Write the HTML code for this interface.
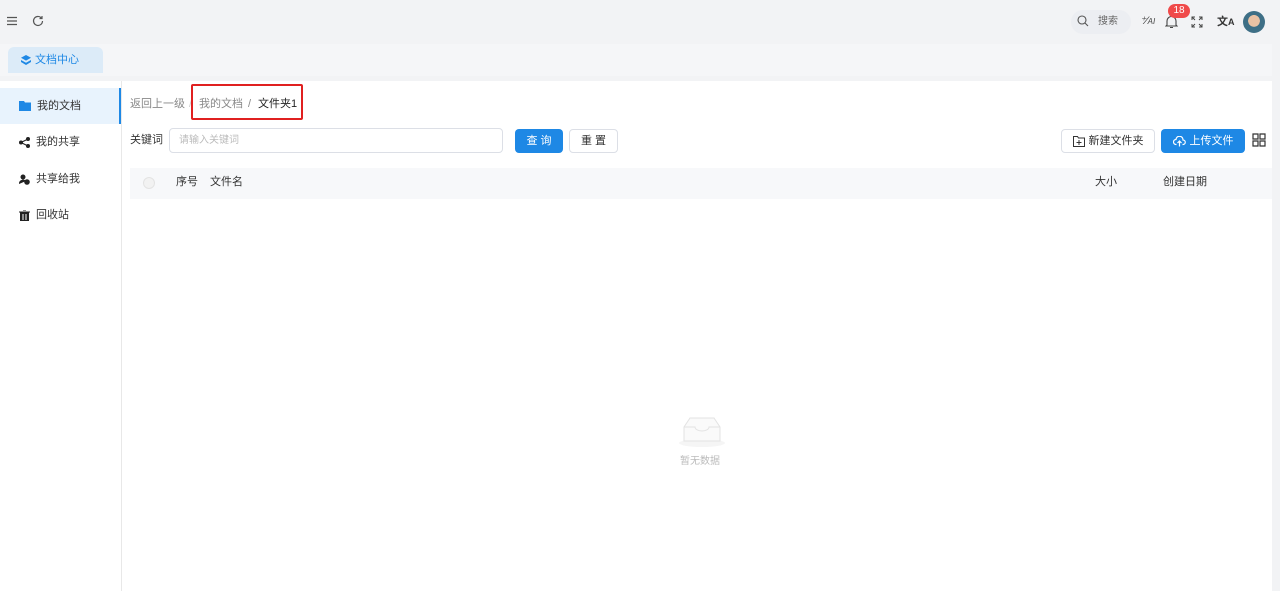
<!DOCTYPE html>
<html><head><meta charset="utf-8"><style>
*{box-sizing:border-box;margin:0;padding:0}
body{width:1280px;height:591px;background:#f2f3f5;font-family:"Liberation Sans","Noto Sans CJK SC",sans-serif;font-size:11px;line-height:14px;color:#333;position:relative;overflow:hidden}
.abs{position:absolute}
.side{left:0;top:81px;width:122px;height:510px;background:#fff;border-right:1px solid #e8e8e8}
.item{position:absolute;left:0;width:121px;height:36px;display:flex;align-items:center;padding-left:19px;font-size:11px;color:#333}
.item svg{margin-right:6px}
.main{left:122px;top:81px;width:1150px;height:510px;background:#fff}
.btn{position:absolute;height:24px;border-radius:4px;display:flex;align-items:center;justify-content:center;font-size:11px}
</style></head><body>
<svg class="abs" style="left:7px;top:16px" width="10" height="10" viewBox="0 0 10 10"><path d="M0 1.5h10M0 5h10M0 8.5h10" stroke="#555" stroke-width="1.2"/></svg>
<svg class="abs" style="left:32px;top:15px" width="12" height="12" viewBox="0 0 12 12"><path d="M10.5 6a4.5 4.5 0 1 1-1.3-3.2M10 1v2.5H7.5" fill="none" stroke="#555" stroke-width="1.2"/></svg>
<div class="abs" style="left:1071px;top:10px;width:60px;height:24px;background:#eceef2;border-radius:12px"></div>
<svg class="abs" style="left:1077px;top:15px" width="12" height="12" viewBox="0 0 12 12"><circle cx="5" cy="5" r="4" fill="none" stroke="#555" stroke-width="1.1"/><path d="M8 8l3 3" stroke="#555" stroke-width="1.1"/></svg>
<div class="abs" style="left:1098px;top:15px;font-size:10px;color:#666">搜索</div>
<div class="abs" style="left:1140px;top:14px;font-size:11px;color:#444;font-style:italic">⁺⁄<span style="font-size:8px">AI</span></div>
<svg class="abs" style="left:1165px;top:15px" width="13" height="14" viewBox="0 0 13 14"><path d="M2 10V6a4.5 4.5 0 0 1 9 0v4l1 1H1zM5 12.5h3" fill="none" stroke="#444" stroke-width="1.1"/></svg>
<div class="abs" style="left:1168px;top:4px;width:22px;height:14px;background:#f04a4a;border-radius:7px;color:#fff;font-size:10px;line-height:14px;text-align:center">18</div>
<svg class="abs" style="left:1191px;top:16px" width="12" height="12" viewBox="0 0 12 12"><path d="M1 4V1h3M8 1h3v3M11 8v3H8M4 11H1V8M1 1l3 3M11 1L8 4M11 11L8 8M1 11l3-3" fill="none" stroke="#444" stroke-width="1"/></svg>
<div class="abs" style="left:1217px;top:15px;font-size:11px;color:#333;font-weight:bold">文<span style="font-size:9px">A</span></div>
<div class="abs" style="left:1243px;top:11px;width:22px;height:22px;border-radius:50%;background:radial-gradient(circle at 50% 45%,#e9c2a4 0 35%,#3e6f86 37%)"></div>
<div class="abs" style="left:0;top:44px;width:1272px;height:32px;background:#f5f6f8"></div>
<div class="abs" style="left:8px;top:47px;width:95px;height:26px;background:#dcebf8;border-radius:6px 6px 0 0;display:flex;align-items:center;padding-left:13px;color:#1e88e5;font-size:11px">
<svg width="10" height="10" viewBox="0 0 10 10" style="margin-right:4px"><path d="M5 0L10 2.8 5 5.6 0 2.8zM0 5l5 2.8L10 5v2L5 10 0 7z" fill="#1e88e5"/></svg>文档中心</div>
<div class="abs side">
<div class="item" style="top:7px;background:#e8f3fd;border-right:2px solid #1e88e5">
<svg width="12" height="10" viewBox="0 0 12 10"><path d="M0 0h5l1 1.5h6V10H0z" fill="#1e88e5"/></svg><span style="color:#333">我的文档</span></div>
<div class="item" style="top:43px"><svg width="11" height="11" viewBox="0 0 11 11"><circle cx="2" cy="5.5" r="2" fill="#222"/><circle cx="9" cy="2" r="2" fill="#222"/><circle cx="9" cy="9" r="2" fill="#222"/><path d="M2 5.5L9 2M2 5.5L9 9" stroke="#222"/></svg>我的共享</div>
<div class="item" style="top:80px"><svg width="11" height="11" viewBox="0 0 11 11"><circle cx="4" cy="3" r="2.5" fill="#222"/><path d="M0 10a4 4 0 0 1 7-3" fill="#222"/><circle cx="8" cy="8" r="2.8" fill="#222"/></svg>共享给我</div>
<div class="item" style="top:116px"><svg width="11" height="11" viewBox="0 0 11 11"><path d="M0 2h11M4 0h3M1.5 3h8v8h-8z" fill="#222" stroke="#222"/><path d="M4 4v6M7 4v6" stroke="#fff"/></svg>回收站</div>
</div>
<div class="abs main">
<div class="abs" style="left:8px;top:16px;color:#888">返回上一级</div>
<div class="abs" style="left:67px;top:16px;color:#ccc">/</div>
<div class="abs" style="left:77px;top:16px;color:#888">我的文档</div>
<div class="abs" style="left:126px;top:16px;color:#888">/</div>
<div class="abs" style="left:136px;top:16px;color:#222">文件夹1</div>
<div class="abs" style="left:69px;top:3px;width:112px;height:36px;border:2px solid #e02020;border-radius:2px"></div>
<div class="abs" style="left:8px;top:52px">关键词</div>
<div class="abs" style="left:47px;top:47px;width:334px;height:25px;border:1px solid #dcdfe6;border-radius:4px;padding-left:9px;line-height:23px;color:#bbb;font-size:10px">请输入关键词</div>
<div class="btn" style="left:393px;top:48px;width:48px;background:#1e88e5;color:#fff">查 询</div>
<div class="btn" style="left:447px;top:48px;width:49px;border:1px solid #dcdfe6;color:#333">重 置</div>
<div class="btn" style="left:939px;top:48px;width:94px;border:1px solid #dcdfe6;color:#333"><svg width="12" height="11" viewBox="0 0 12 11" style="margin-right:4px"><path d="M0.5 0.5h4l1 1.5h6v8.5H0.5z M6 4v5M3.5 6.5h5" fill="none" stroke="#333"/></svg>新建文件夹</div>
<div class="btn" style="left:1039px;top:48px;width:84px;background:#1e88e5;color:#fff"><svg width="13" height="11" viewBox="0 0 13 11" style="margin-right:4px"><path d="M3.5 8.5H3a2.5 2.5 0 0 1 0-5 3.5 3.5 0 0 1 7 0.5 2 2 0 0 1 0 4.5h-.5M6.5 10.5V5M4.5 7l2-2 2 2" fill="none" stroke="#fff" stroke-width="1.2"/></svg>上传文件</div>
<svg class="abs" style="left:1130px;top:52px" width="14" height="14" viewBox="0 0 14 14"><path d="M1 1h5v5H1zM8 1h5v5H8zM1 8h5v5H1zM8 8h5v5H8z" fill="none" stroke="#333" stroke-width="1.2"/></svg>
<div class="abs" style="left:8px;top:87px;width:1142px;height:31px;background:#f7f8fa"></div>
<div class="abs" style="left:21px;top:96px;width:12px;height:12px;border-radius:50%;border:1px solid #e3e3e3;background:#f2f2f2"></div>
<div class="abs" style="left:54px;top:94px">序号</div>
<div class="abs" style="left:88px;top:94px">文件名</div>
<div class="abs" style="left:973px;top:94px">大小</div>
<div class="abs" style="left:1041px;top:94px">创建日期</div>
<svg class="abs" style="left:555px;top:334px" width="50" height="34" viewBox="0 0 50 34"><ellipse cx="25" cy="28" rx="23" ry="4" fill="#f5f5f5"/><path d="M7 12l6-9h24l6 9v14H7z" fill="#fafafa" stroke="#e3e3e3"/><path d="M7 12h11a7 4 0 0 0 14 0h11" fill="none" stroke="#e3e3e3"/></svg>
<div class="abs" style="left:558px;top:374px;color:#bbb;font-size:10px">暂无数据</div>
</div>
</body></html>
